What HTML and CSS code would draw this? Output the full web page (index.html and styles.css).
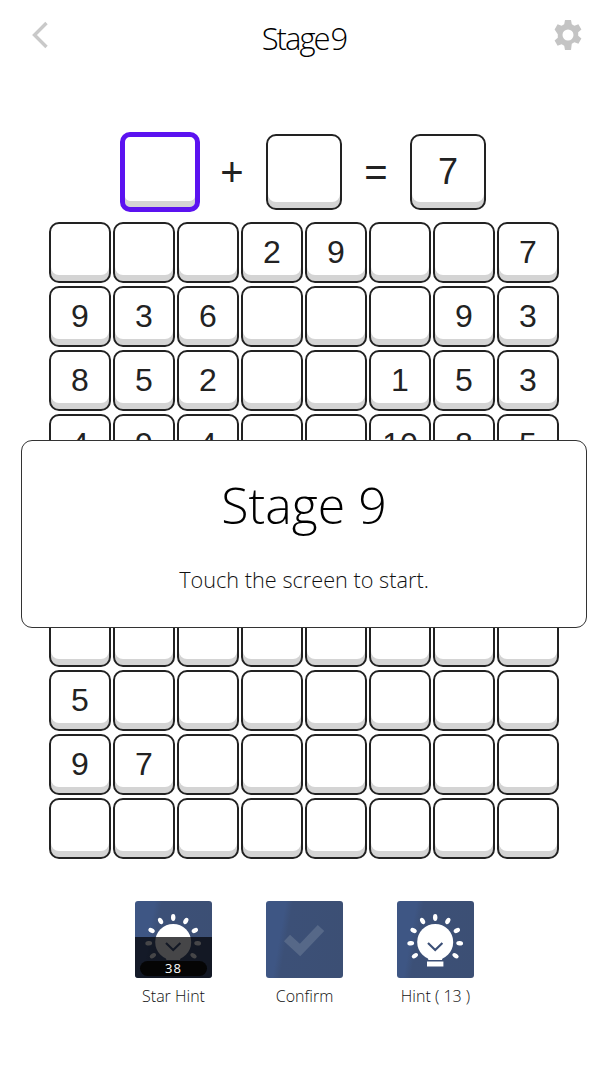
FILE: index.html
```html
<!DOCTYPE html>
<html lang="en">

<head>
    <meta charset="UTF-8">
    <meta name="viewport" content="width=device-width, initial-scale=1.0">
    <title>Stage 9</title>
    <link rel="stylesheet" href="styles.css">
</head>

<body>
    <svg class="defs" width="0" height="0">
        <symbol id="bulb" viewBox="0 0 77 77">
            <g fill="#fff">
                <ellipse cx="38.2" cy="16.5" rx="2.2" ry="3.4" transform="rotate(0 38.2 41)"/>
                <ellipse cx="38.2" cy="16.5" rx="2.2" ry="3.4" transform="rotate(31 38.2 41)"/>
                <ellipse cx="38.2" cy="16.5" rx="2.2" ry="3.4" transform="rotate(62 38.2 41)"/>
                <ellipse cx="38.2" cy="16.5" rx="2.2" ry="3.4" transform="rotate(93 38.2 41)"/>
                <ellipse cx="38.2" cy="16.5" rx="2.2" ry="3.4" transform="rotate(124 38.2 41)"/>
                <ellipse cx="38.2" cy="16.5" rx="2.2" ry="3.4" transform="rotate(-31 38.2 41)"/>
                <ellipse cx="38.2" cy="16.5" rx="2.2" ry="3.4" transform="rotate(-62 38.2 41)"/>
                <ellipse cx="38.2" cy="16.5" rx="2.2" ry="3.4" transform="rotate(-93 38.2 41)"/>
                <ellipse cx="38.2" cy="16.5" rx="2.2" ry="3.4" transform="rotate(-124 38.2 41)"/>
                <circle cx="38.2" cy="41" r="18"/>
                <path d="M30 52h16.4l-1.4 7H31.400z"/>
                <path d="M30 60.500h16.400v5H30z"/>
            </g>
            <path d="M31 42l7.200 7 7.200-7" fill="none" stroke="#3c5077" stroke-width="2.200"/>
        </symbol>
    </svg>

    <div class="topbar">
        <svg class="back" width="18" height="28" viewBox="0 0 18 28">
            <path d="M15.500 2L3.500 14l12 12" fill="none" stroke="#c9c9c9" stroke-width="3.400"/>
        </svg>
        <div class="title">Stage 9</div>
        <svg class="gear" width="32" height="32" viewBox="0 0 32 32">
            <path fill="#c4c4c4" fill-rule="evenodd" d="M13 1h6l.8 4.200 2.600 1.500 4-1.400 3 5.200-3.200 2.800v3.400l3.200 2.800-3 5.200-4-1.400-2.600 1.500L19 31h-6l-.8-4.200-2.600-1.500-4 1.400-3-5.200 3.200-2.800v-3.400L2.600 10.500l3-5.200 4 1.400 2.600-1.500zM16 10.500a5.500 5.500 0 1 0 0 11 5.500 5.500 0 0 0 0-11z"/>
        </svg>
    </div>

    <div class="equation">
        <div class="cell big selected"></div>
        <div class="op">+</div>
        <div class="cell big"></div>
        <div class="op">=</div>
        <div class="cell big">7</div>
    </div>

    <div class="board">
        <div class="cell"></div><div class="cell"></div><div class="cell"></div><div class="cell">2</div><div class="cell">9</div><div class="cell"></div><div class="cell"></div><div class="cell">7</div>
        <div class="cell">9</div><div class="cell">3</div><div class="cell">6</div><div class="cell"></div><div class="cell"></div><div class="cell"></div><div class="cell">9</div><div class="cell">3</div>
        <div class="cell">8</div><div class="cell">5</div><div class="cell">2</div><div class="cell"></div><div class="cell"></div><div class="cell">1</div><div class="cell">5</div><div class="cell">3</div>
        <div class="cell">4</div><div class="cell">9</div><div class="cell">4</div><div class="cell"></div><div class="cell"></div><div class="cell">10</div><div class="cell">8</div><div class="cell">5</div>
        <div class="cell"></div><div class="cell"></div><div class="cell"></div><div class="cell"></div><div class="cell"></div><div class="cell"></div><div class="cell"></div><div class="cell"></div>
        <div class="cell"></div><div class="cell"></div><div class="cell"></div><div class="cell"></div><div class="cell"></div><div class="cell"></div><div class="cell"></div><div class="cell"></div>
        <div class="cell"></div><div class="cell"></div><div class="cell"></div><div class="cell"></div><div class="cell"></div><div class="cell"></div><div class="cell"></div><div class="cell"></div>
        <div class="cell">5</div><div class="cell"></div><div class="cell"></div><div class="cell"></div><div class="cell"></div><div class="cell"></div><div class="cell"></div><div class="cell"></div>
        <div class="cell">9</div><div class="cell">7</div><div class="cell"></div><div class="cell"></div><div class="cell"></div><div class="cell"></div><div class="cell"></div><div class="cell"></div>
        <div class="cell"></div><div class="cell"></div><div class="cell"></div><div class="cell"></div><div class="cell"></div><div class="cell"></div><div class="cell"></div><div class="cell"></div>
    </div>

    <div class="actions">
        <div class="action">
            <div class="tile">
                <svg width="77" height="77"><use href="#bulb"/></svg>
                <div class="shade"></div>
                <div class="count">38</div>
            </div>
            <div class="label">Star Hint</div>
        </div>
        <div class="action">
            <div class="tile">
                <svg width="77" height="77" viewBox="0 0 77 77">
                    <path d="M21 37l13 12 21-22" fill="none" stroke="#566888" stroke-width="9"/>
                </svg>
            </div>
            <div class="label">Confirm</div>
        </div>
        <div class="action">
            <div class="tile">
                <svg width="77" height="77"><use href="#bulb"/></svg>
            </div>
            <div class="label">Hint ( 13 )</div>
        </div>
    </div>

    <div class="modal">
        <div class="modal-title">Stage 9</div>
        <div class="modal-text">Touch the screen to start.</div>
    </div>
</body>

</html>
```
FILE: styles.css
```css
body {
    font-family: "Open Sans", "Noto Sans", sans-serif;
    margin: 0;
    width: 608px;
    height: 1080px;
    overflow: hidden;
    position: relative;
    background-color: #fff;
    color: #000;
}

.defs {
    display: block;
    height: 0;
}

.topbar {
    height: 76px;
    padding: 0 24px;
    display: grid;
    grid-template-columns: 1fr auto 1fr;
    align-items: center;
    box-sizing: border-box;
}

.back {
    margin: -6px 0 0 7px;
}

.gear {
    margin-top: -6px;
    justify-self: end;
}

.title {
    font-size: 31px;
    font-weight: 300;
    letter-spacing: -2px;
    word-spacing: -4px;
}

.equation {
    margin-top: 56px;
    padding-left: 120px;
    height: 80px;
    display: flex;
    align-items: center;
}

.cell {
    display: flex;
    align-items: center;
    justify-content: center;
    box-sizing: border-box;
    width: 61px;
    height: 61px;
    padding-bottom: 1px;
    background-color: #fff;
    border: 2px solid #222;
    border-radius: 10px;
    box-shadow: inset 0 -6px 0 #d4d4d4;
    font-family: "Liberation Sans", Arial, sans-serif;
    font-size: 32px;
    color: #222;
}

.cell.big {
    width: 76px;
    height: 76px;
    font-size: 36px;
}

.cell.selected {
    width: 80px;
    height: 80px;
    border: 5px solid #5b12f0;
}

.board .cell {
    width: 62px;
}

.op {
    width: 64px;
    text-align: center;
    font-family: "Liberation Sans", Arial, sans-serif;
    font-size: 40px;
    color: #222;
    margin-right: 2px;
}

.op + .cell + .op {
    width: 68px;
    margin-right: 0;
}

.board {
    margin-top: 10px;
    padding-left: 49px;
    display: grid;
    grid-template-columns: repeat(8, 62px);
    grid-auto-rows: 61px;
    column-gap: 2px;
    row-gap: 3px;
}

.actions {
    margin-top: 42px;
    padding-left: 108px;
    display: flex;
}

.action {
    width: 131px;
    display: flex;
    flex-direction: column;
    align-items: center;
}

.tile {
    position: relative;
    width: 77px;
    height: 77px;
    border-radius: 3px;
    overflow: hidden;
    background: linear-gradient(100deg, #3e5684 0, #3e5684 22%, #3c5077 30%, #3c4f74 100%);
}

.tile svg {
    display: block;
}

.shade {
    position: absolute;
    left: 0;
    right: 0;
    top: 36px;
    bottom: 0;
    background-color: rgba(5, 5, 8, 0.74);
}

.count {
    position: absolute;
    left: 5px;
    right: 5px;
    bottom: 2px;
    height: 15px;
    line-height: 15px;
    border-radius: 8px;
    background-color: #050505;
    color: #fff;
    text-align: center;
    font-size: 13px;
    letter-spacing: 1px;
}

.label {
    margin-top: 7px;
    font-size: 16px;
    font-weight: 300;
    white-space: nowrap;
    color: #111;
}

.modal {
    position: absolute;
    left: 21px;
    top: 440px;
    width: 566px;
    height: 188px;
    box-sizing: border-box;
    padding-top: 31px;
    background-color: #fff;
    border: 1.5px solid #333;
    border-radius: 11px;
    text-align: center;
}

.modal-title {
    font-size: 50px;
    font-weight: 300;
    line-height: 66px;
}

.modal-text {
    margin-top: 27px;
    font-size: 21.700px;
    font-weight: 300;
    line-height: 30px;
    color: #111;
}
```
